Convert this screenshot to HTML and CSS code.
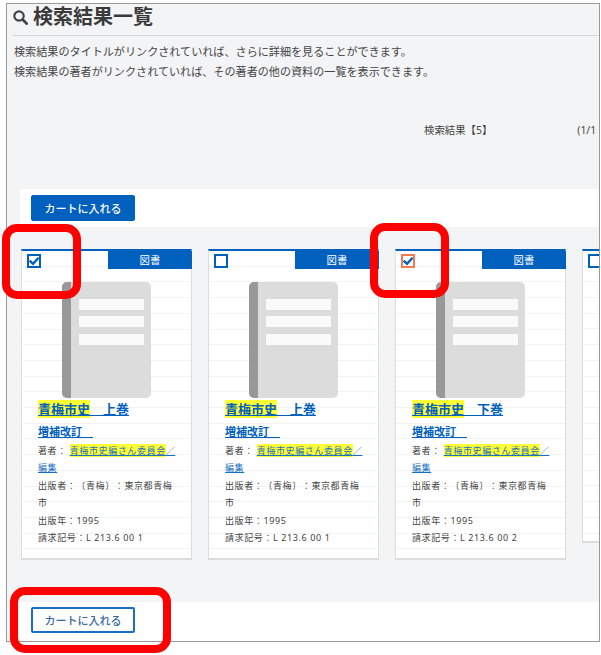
FILE: index.html
```html
<!DOCTYPE html>
<html lang="ja">
<head>
<meta charset="utf-8">
<title>検索結果一覧</title>
<link rel="stylesheet" href="styles.css">
</head>
<body>
<main class="frame">
  <header class="heading">
    <svg class="search-icon" viewBox="0 0 15 15" aria-hidden="true"><circle cx="6" cy="6" r="4.7" fill="none" stroke="#444" stroke-width="2.2"/><path d="M9.6 9.6l4 4" stroke="#444" stroke-width="2.8" stroke-linecap="round"/></svg>
    <h1>検索結果一覧</h1>
  </header>
  <p class="note">検索結果のタイトルがリンクされていれば、さらに詳細を見ることができます。</p>
  <p class="note">検索結果の著者がリンクされていれば、その著者の他の資料の一覧を表示できます。</p>
  <div class="count"><span>検索結果【5】</span><span class="pages">(1/1</span></div>
  <div class="band band-top"><button class="btn btn-solid">カートに入れる</button></div>
  <section class="cards">
    <article class="card">
      <div class="card-head"><span class="check"><svg viewBox="0 0 14 14"><path d="M2.6 6.6l3.4 3.2 5.6-6" fill="none" stroke="#0060bd" stroke-width="2.4"/></svg></span><span class="tag">図書</span></div>
      <svg class="book" viewBox="0 0 89 116"><rect width="89" height="116" rx="5" fill="#dcdcdc"/><path d="M5 0h4v116H5a5 5 0 0 1-5-5V5a5 5 0 0 1 5-5z" fill="#999"/><path d="M17 17h65v11H17zM17 34h65v11H17zM17 52h65v11H17z" fill="#fafafa"/></svg>
      <a class="title" href="#"><mark>青梅市史</mark>　上巻</a>
      <a class="subtitle" href="#">増補改訂　</a>
      <p class="meta">著者： <a href="#"><mark>青梅市史編さん委員会</mark>／編集</a></p>
      <p class="meta">出版者：〔青梅〕：東京都青梅市</p>
      <p class="meta">出版年：1995</p>
      <p class="meta">請求記号：L 213.6 00 1</p>
    </article>
    <article class="card">
      <div class="card-head"><span class="check"></span><span class="tag">図書</span></div>
      <svg class="book" viewBox="0 0 89 116"><rect width="89" height="116" rx="5" fill="#dcdcdc"/><path d="M5 0h4v116H5a5 5 0 0 1-5-5V5a5 5 0 0 1 5-5z" fill="#999"/><path d="M17 17h65v11H17zM17 34h65v11H17zM17 52h65v11H17z" fill="#fafafa"/></svg>
      <a class="title" href="#"><mark>青梅市史</mark>　上巻</a>
      <a class="subtitle" href="#">増補改訂　</a>
      <p class="meta">著者： <a href="#"><mark>青梅市史編さん委員会</mark>／編集</a></p>
      <p class="meta">出版者：〔青梅〕：東京都青梅市</p>
      <p class="meta">出版年：1995</p>
      <p class="meta">請求記号：L 213.6 00 1</p>
    </article>
    <article class="card">
      <div class="card-head"><span class="check check-focus"><svg viewBox="0 0 14 14"><path d="M2.6 6.6l3.4 3.2 5.6-6" fill="none" stroke="#0060bd" stroke-width="2.4"/></svg></span><span class="tag">図書</span></div>
      <svg class="book" viewBox="0 0 89 116"><rect width="89" height="116" rx="5" fill="#dcdcdc"/><path d="M5 0h4v116H5a5 5 0 0 1-5-5V5a5 5 0 0 1 5-5z" fill="#999"/><path d="M17 17h65v11H17zM17 34h65v11H17zM17 52h65v11H17z" fill="#fafafa"/></svg>
      <a class="title" href="#"><mark>青梅市史</mark>　下巻</a>
      <a class="subtitle" href="#">増補改訂　</a>
      <p class="meta">著者： <a href="#"><mark>青梅市史編さん委員会</mark>／編集</a></p>
      <p class="meta">出版者：〔青梅〕：東京都青梅市</p>
      <p class="meta">出版年：1995</p>
      <p class="meta">請求記号：L 213.6 00 2</p>
    </article>
    <article class="card">
      <div class="card-head"><span class="check"></span><span class="tag">図書</span></div>
      <svg class="book" viewBox="0 0 89 116"><rect width="89" height="116" rx="5" fill="#dcdcdc"/><path d="M5 0h4v116H5a5 5 0 0 1-5-5V5a5 5 0 0 1 5-5z" fill="#999"/><path d="M17 17h65v11H17zM17 34h65v11H17zM17 52h65v11H17z" fill="#fafafa"/></svg>
      <a class="title" href="#"><mark>青梅市史</mark></a>
      <a class="subtitle" href="#">増補改訂　</a>
      <p class="meta">著者： <a href="#"><mark>青梅市史編さん委員会</mark>／編集</a></p>
      <p class="meta">出版者：〔青梅〕：東京都青梅市</p>
      <p class="meta">請求記号：L 213.6 00 3</p>
    </article>
  </section>
  <div class="band band-bottom"><button class="btn btn-outline">カートに入れる</button></div>
</main>
<div class="callout callout-a"></div>
<div class="callout callout-b"></div>
<div class="callout callout-c"></div>
</body>
</html>
```

FILE: styles.css
```css
* { box-sizing: border-box; }

html, body {
  margin: 0;
  height: 655px;
  overflow: hidden;
  background: #fff;
  font-family: "Noto Sans", "Noto Sans CJK JP", sans-serif;
  color: #444;
  text-spacing-trim: space-all;
}

.frame {
  display: flex;
  flex-direction: column;
  width: 594px;
  height: 639px;
  margin: 3px 0 0 6px;
  border: 1px solid #999;
  background: #f3f4f6;
  overflow: hidden;
}

.heading {
  display: flex;
  flex: none;
  align-items: center;
  gap: 5px;
  height: 32px;
  padding-bottom: 5px;
  margin: 0 0 6px 6px;
  border-bottom: 1px solid #d8d8d8;
}

.search-icon { width: 15px; height: 15px; }

h1 {
  margin: 0;
  font-size: 20px;
  line-height: 26px;
  font-weight: 700;
  color: #3a3a3a;
}

.note {
  flex: none;
  margin: 0 0 0 7px;
  height: 20px;
  font-size: 11.1px;
  line-height: 20px;
  white-space: nowrap;
}

.count {
  display: flex;
  flex: none;
  gap: 85px;
  margin-top: 38px;
  padding-left: 417px;
  height: 20px;
  font-size: 10.4px;
  line-height: 20px;
  white-space: nowrap;
}

.band {
  display: flex;
  flex: none;
  align-items: center;
  margin-left: 13px;
  padding-left: 11px;
  background: #fff;
}

.band-top { height: 38px; margin-top: 49px; }
.band-bottom { height: 39px; margin-top: 44px; padding-bottom: 3px; }

.btn {
  width: 104px;
  height: 26px;
  padding: 0;
  border-radius: 2px;
  font: 500 11px/1 "Noto Sans", "Noto Sans CJK JP", sans-serif;
}

.btn-solid { border: 1px solid #0060bd; background: #0060bd; color: #fff; }
.btn-outline { border: 2px solid #1a6fc4; background: #fff; color: #35689c; }

.cards {
  display: flex;
  flex: none;
  align-items: flex-start;
  gap: 16px;
  margin-top: 22px;
  padding-left: 14px;
  height: 309px;
}

.card {
  flex: 0 0 171px;
  padding: 0 0 12px;
  border: 1px solid #dcdcdc;
  border-top: 2px solid #0060bd;
  border-bottom-width: 2px;
  background: repeating-linear-gradient(#fff 0 14.7px, #f2f3f3 14.7px 15.7px);
}

.card-head { display: flex; height: 18px; }

.check {
  flex: none;
  width: 14px;
  height: 14px;
  margin: 3px 0 0 5px;
  border: 2.5px solid #0060bd;
  background: #fff;
  position: relative;
}

.check svg { position: absolute; inset: -2.5px; width: 14px; height: 14px; display: block; }
.check-focus { border-color: #f47c4c; }

.tag {
  width: 84px;
  margin: 0 -1px 0 auto;
  background: #0060bd;
  color: #fff;
  font-size: 10.4px;
  line-height: 18px;
  text-align: center;
}

.book {
  display: block;
  width: 89px;
  height: 116px;
  margin: 13px 0 0 40px;
}

.title, .subtitle, .meta { margin-left: 16px; margin-right: 14px; }

.title {
  display: block;
  margin-top: 1px;
  font-size: 13px;
  font-weight: 700;
  line-height: 20px;
  color: #0060bd;
}

.subtitle {
  display: block;
  margin-top: 5px;
  font-size: 11px;
  font-weight: 700;
  line-height: 16px;
  color: #0060bd;
}

.meta {
  margin-top: 0;
  margin-bottom: 0;
  font-size: 9px;
  letter-spacing: 0.6px;
  line-height: 17.4px;
  color: #444;
}

.subtitle + .meta { margin-top: 2px; }

.meta a { color: #1a6fc4; }

mark { background: #ffff33; color: inherit; }

.callout {
  position: absolute;
  border: 8px solid #f00;
  border-radius: 15px;
  background: transparent;
}

.callout-a { left: 2px; top: 224px; width: 79px; height: 75px; }
.callout-b { left: 370px; top: 223px; width: 79px; height: 75px; }
.callout-c { left: 10px; top: 587px; width: 161px; height: 66px; }
```
